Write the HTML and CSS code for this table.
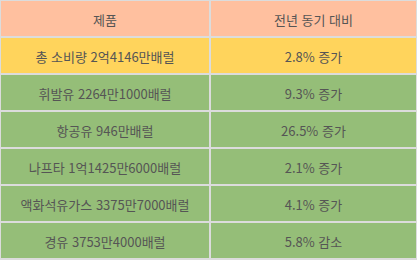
FILE: index.html
```html
<!DOCTYPE html>
<html lang="ko">
<head>
<meta charset="utf-8">
<link rel="stylesheet" href="styles.css">
</head>
<body>
<table class="stats">
  <thead>
    <tr class="head"><th>제품</th><th>전년 동기 대비</th></tr>
  </thead>
  <tbody>
    <tr class="total"><td>총 소비량 2억4146만배럴</td><td>2.8% 증가</td></tr>
    <tr class="item"><td>휘발유 2264만1000배럴</td><td>9.3% 증가</td></tr>
    <tr class="item"><td>항공유 946만배럴</td><td>26.5% 증가</td></tr>
    <tr class="item"><td>나프타 1억1425만6000배럴</td><td>2.1% 증가</td></tr>
    <tr class="item"><td>액화석유가스 3375만7000배럴</td><td>4.1% 증가</td></tr>
    <tr class="item"><td>경유 3753만4000배럴</td><td>5.8% 감소</td></tr>
  </tbody>
</table>
</body>
</html>
```

FILE: styles.css
```css
html, body {
  margin: 0;
  padding: 0;
  background: #ffffff;
}
.stats {
  width: 417px;
  border-collapse: separate;
  border-spacing: 2px;
  margin: -1px 0 0 -1px;
  width: 419px;
  background: #dcdcdc;
  font-family: "Noto Sans CJK KR", "Noto Sans", sans-serif;
  font-size: 13px;
  color: #555555;
}
.stats th,
.stats td {
  height: 35px;
  padding: 2px 0 0 0;
  box-sizing: border-box;
  text-align: center;
  vertical-align: middle;
  font-weight: normal;
}
.stats th:first-child,
.stats td:first-child {
  width: 208px;
}
.head th {
  background: #ffc09f;
}
.total td {
  background: #ffd45c;
}
.item td {
  background: #95be78;
}
```
